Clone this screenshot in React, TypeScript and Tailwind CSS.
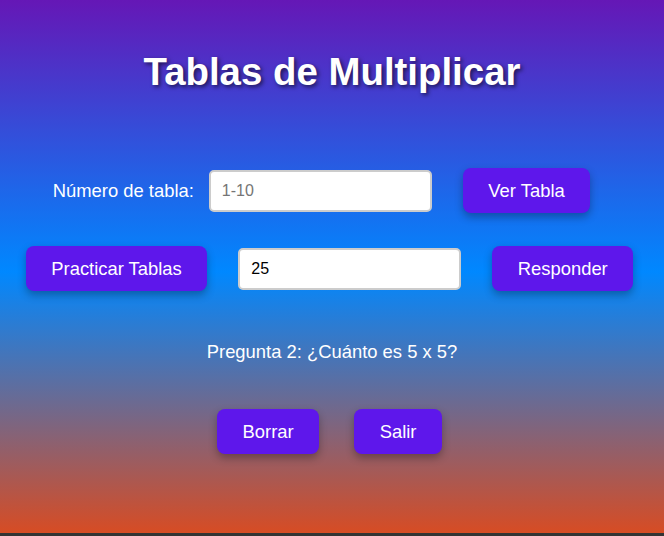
const btn =
    "bg-[#5e17eb] text-white text-[18.4px] leading-[21px] px-[25.5px] py-3 rounded-lg shadow-[0_4px_8px_rgba(0,0,0,0.3)] cursor-pointer";

const inputCls =
    "w-[223px] h-[42px] bg-white border-2 border-[#cccccc] rounded-[5px] px-[11px] text-[16px] text-black placeholder:text-[#757575] outline-none";

const App = () => {
    return (
        <div className="w-full h-[536px] bg-[#333333] font-['Liberation_Sans',Arial,sans-serif]">
            <div className="h-[533px] flex flex-col items-center bg-[linear-gradient(to_bottom,#6517b6_0%,#0088ff_51%,#d74c24_100%)]">
                <h1 className="mt-[50px] text-[38.4px] leading-[44px] font-bold text-white [text-shadow:2px_2px_4px_rgba(0,0,0,0.6)]">
                    Tablas de Multiplicar
                </h1>

                <div className="mt-[74px] flex items-center mr-[21px]">
                    <label className="text-white text-[18.4px] leading-[21px]">Número de tabla:</label>
                    <input className={`${inputCls} ml-[15px]`} placeholder="1-10" />
                    <button className={`${btn} ml-[31px]`}>Ver Tabla</button>
                </div>

                <div className="mt-[33px] flex items-center mr-[5px]">
                    <button className={btn}>Practicar Tablas</button>
                    <input className={`${inputCls} ml-[31px] w-[222px]`} defaultValue="25" />
                    <button className={`${btn} ml-[31px]`}>Responder</button>
                </div>

                <p className="mt-[50px] text-white text-[18.4px] leading-[21px]">
                    Pregunta 2: ¿Cuánto es 5 x 5?
                </p>

                <div className="mt-[47px] flex items-center gap-[35px] mr-[5px]">
                    <button className={btn}>Borrar</button>
                    <button className={btn}>Salir</button>
                </div>
            </div>
        </div>
    );
};

export default App;
